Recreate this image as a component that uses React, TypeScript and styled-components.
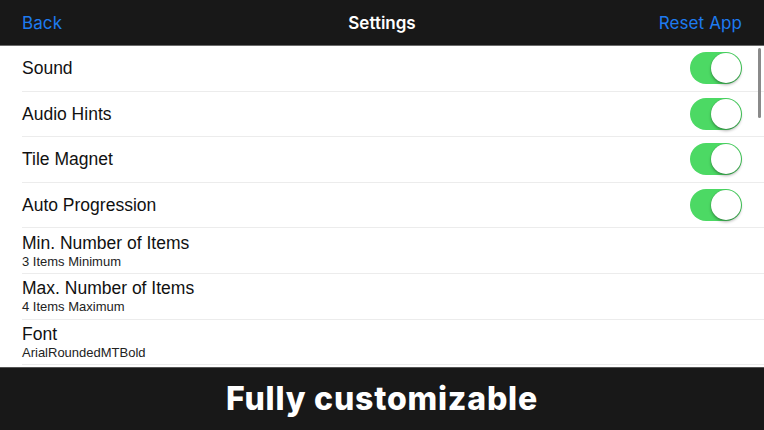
import React from "react";
import styled, { createGlobalStyle } from "styled-components";

const Global = createGlobalStyle`
  html, body { margin: 0; padding: 0; background: #ffffff; }
  body { font-family: "Liberation Sans", Arial, sans-serif; }
  * { box-sizing: border-box; }
`;

const Screen = styled.div`
  width: 764px;
  height: 430px;
  display: flex;
  flex-direction: column;
  overflow: hidden;
  background: #fff;
`;

const NavBar = styled.header`
  height: 46px;
  flex: none;
  background: #181818;
  border-bottom: 1px solid #6b6b6b;
  display: grid;
  grid-template-columns: 1fr auto 1fr;
  align-items: center;
  padding: 0 22px 0 22px;
  font-family: Inter, "Liberation Sans", sans-serif;
`;

const NavButton = styled.span<{ $align: "left" | "right" }>`
  color: #1e7bf0;
  font-size: 17px;
  justify-self: ${(p) => (p.$align === "left" ? "start" : "end")};
  letter-spacing: 0.1px;
`;

const NavTitle = styled.span`
  color: #ffffff;
  font-size: 17px;
  font-weight: 600;
`;

const List = styled.div`
  flex: 1;
  position: relative;
  display: flex;
  flex-direction: column;
  background: #fff;
`;

const Row = styled.div`
  height: 45.6px;
  flex: none;
  margin-left: 22px;
  padding-right: 22px;
  border-bottom: 1px solid #ececec;
  display: flex;
  align-items: center;
  justify-content: space-between;
  &:last-child { border-bottom: none; }
`;

const Labels = styled.div`
  display: flex;
  flex-direction: column;
`;

const Label = styled.span`
  font-size: 17.5px;
  color: #111;
  line-height: 20px;
`;

const Sub = styled.span`
  font-size: 13px;
  color: #222;
  line-height: 15px;
  margin-top: 1px;
`;

const Toggle = styled.div`
  width: 52px;
  height: 32px;
  border-radius: 16px;
  background: #4cd964;
  position: relative;
  flex: none;
`;

const Knob = styled.div`
  position: absolute;
  right: 1px;
  top: 1px;
  width: 30px;
  height: 30px;
  border-radius: 50%;
  background: #fff;
  box-shadow: 0 2px 3px rgba(0, 0, 0, 0.3), 0 0 0 0.5px rgba(0, 0, 0, 0.1);
`;

const ScrollBar = styled.div`
  position: absolute;
  right: 3px;
  top: 2px;
  width: 3px;
  height: 70px;
  border-radius: 2px;
  background: #8a8a8a;
`;

const Banner = styled.footer`
  height: 63px;
  flex: none;
  background: #181818;
  border-top: 1px solid #555;
  display: flex;
  align-items: center;
  justify-content: center;
  color: #fff;
  font-family: Inter, "Liberation Sans", sans-serif;
  font-size: 32px;
  font-weight: 800;
  letter-spacing: 0.8px;
  padding-bottom: 1px;
`;

type Item = { label: string; sub?: string; toggle?: boolean };

const items: Item[] = [
  { label: "Sound", toggle: true },
  { label: "Audio Hints", toggle: true },
  { label: "Tile Magnet", toggle: true },
  { label: "Auto Progression", toggle: true },
  { label: "Min. Number of Items", sub: "3 Items Minimum" },
  { label: "Max. Number of Items", sub: "4 Items Maximum" },
  { label: "Font", sub: "ArialRoundedMTBold" },
];

export default function App() {
  return (
    <Screen>
      <Global />
      <NavBar>
        <NavButton $align="left">Back</NavButton>
        <NavTitle>Settings</NavTitle>
        <NavButton $align="right">Reset App</NavButton>
      </NavBar>
      <List>
        {items.map((it) => (
          <Row key={it.label}>
            <Labels>
              <Label>{it.label}</Label>
              {it.sub && <Sub>{it.sub}</Sub>}
            </Labels>
            {it.toggle && (
              <Toggle>
                <Knob />
              </Toggle>
            )}
          </Row>
        ))}
        <ScrollBar />
      </List>
      <Banner>Fully customizable</Banner>
    </Screen>
  );
}
